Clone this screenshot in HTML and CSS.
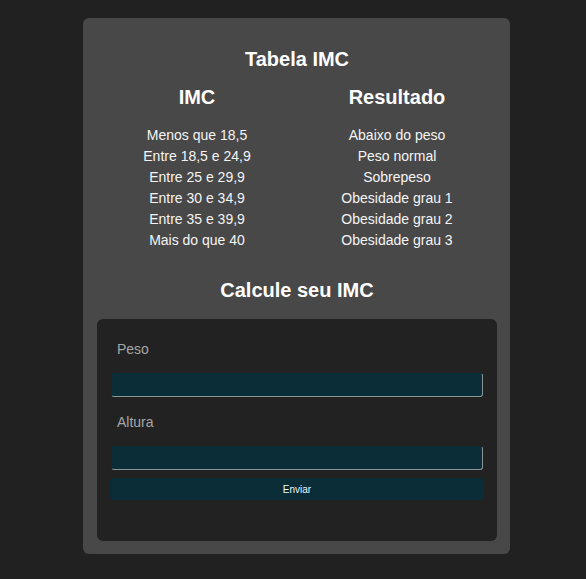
FILE: index.html
```html
<!DOCTYPE html>
<html lang="pt">
<head>
<meta charset="utf-8">
<title>Tabela IMC</title>
<link rel="stylesheet" href="styles.css">
</head>
<body>
<main class="card">
  <h2 class="title">Tabela IMC</h2>
  <table class="imc-table">
    <thead>
      <tr><th>IMC</th><th>Resultado</th></tr>
    </thead>
    <tbody>
      <tr><td>Menos que 18,5</td><td>Abaixo do peso</td></tr>
      <tr><td>Entre 18,5 e 24,9</td><td>Peso normal</td></tr>
      <tr><td>Entre 25 e 29,9</td><td>Sobrepeso</td></tr>
      <tr><td>Entre 30 e 34,9</td><td>Obesidade grau 1</td></tr>
      <tr><td>Entre 35 e 39,9</td><td>Obesidade grau 2</td></tr>
      <tr><td>Mais do que 40</td><td>Obesidade grau 3</td></tr>
    </tbody>
  </table>
  <h2 class="title calc">Calcule seu IMC</h2>
  <form class="form">
    <label class="label" for="peso">Peso</label>
    <input class="input" id="peso" type="text">
    <label class="label" for="altura">Altura</label>
    <input class="input" id="altura" type="text">
    <button class="btn" type="button">Enviar</button>
  </form>
</main>
</body>
</html>
```
FILE: styles.css
```css
html, body {
  margin: 0;
  padding: 0;
  background: #212121;
  font-family: "Liberation Sans", Arial, sans-serif;
  color: #fff;
}
body {
  padding: 18px 0 0 83px;
}
.card {
  width: 400px;
  padding: 30px 13px 13px 14px;
  background: #484848;
  border-radius: 6px;
}
.title {
  margin: 0;
  font-size: 20px;
  line-height: 23px;
  font-weight: bold;
  text-align: center;
}
.imc-table {
  width: 400px;
  margin-top: 15px;
  border-collapse: collapse;
}
.imc-table th {
  width: 200px;
  padding: 0 0 16px 0;
  font-size: 20px;
  line-height: 23px;
  font-weight: bold;
  text-align: center;
}
.imc-table td {
  padding: 0;
  font-size: 14px;
  line-height: 21px;
  text-align: center;
  color: #f4f4f4;
}
.title.calc {
  margin-top: 28px;
}
.form {
  margin-top: 17px;
  background: #222;
  border-radius: 6px;
  padding: 22px 14px 41px 14px;
  display: flex;
  flex-direction: column;
}
.label {
  display: block;
  margin-left: 6px;
  font-size: 14px;
  line-height: 16px;
  color: #a6a6a6;
}
.input {
  box-sizing: border-box;
  height: 24px;
  margin: 16px 0 17px 0;
  background: #0a2d37;
  border: 1px solid;
  border-color: #0a2d37 #8a9598 #8a9598 #0a2d37;
  border-radius: 3px;
  padding: 0 4px;
  color: #fff;
  font-family: inherit;
}
.input:last-of-type {
  margin-bottom: 8px;
}
.btn {
  height: 22px;
  margin: 0 -1px;
  background: #0a2d37;
  border: none;
  border-radius: 3px;
  color: #e8f8f8;
  font-family: "Liberation Sans", Arial, sans-serif;
  font-size: 10px;
  cursor: pointer;
}
```
